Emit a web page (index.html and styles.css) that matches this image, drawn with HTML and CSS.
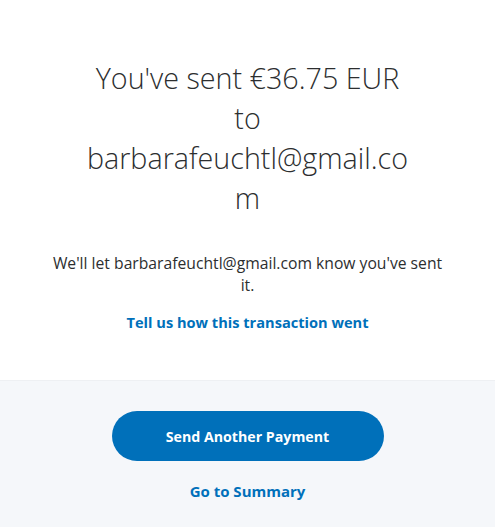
FILE: index.html
```html
<!DOCTYPE html>
<html>
<head>
<meta charset="utf-8">
<link rel="stylesheet" href="styles.css">
</head>
<body>
<main class="page">
  <section class="top">
    <h1 class="headline">You've sent €36.75 EUR to barbarafeuchtl@gmail.com</h1>
    <p class="note">We'll let barbarafeuchtl@gmail.com know you've sent it.</p>
    <a class="link" href="#">Tell us how this transaction went</a>
  </section>
  <section class="bottom">
    <button class="primary">Send Another Payment</button>
    <a class="link summary" href="#">Go to Summary</a>
  </section>
</main>
</body>
</html>
```
FILE: styles.css
```css
html, body {
  margin: 0;
  padding: 0;
  height: 100%;
}
body {
  font-family: "Open Sans", "Noto Sans", sans-serif;
  color: #2c2e2f;
  background: #f5f7fa;
}
.page {
  display: flex;
  flex-direction: column;
  min-height: 100%;
}
.top {
  background: #ffffff;
  height: 380px;
  box-sizing: border-box;
  padding-top: 58px;
  display: flex;
  flex-direction: column;
  align-items: center;
  text-align: center;
}
.headline {
  margin: 0;
  width: 332px;
  font-weight: 300;
  font-size: 28.7px;
  line-height: 40px;
  overflow-wrap: anywhere;
  color: #2c2e2f;
}
.note {
  margin: 34px 0 0;
  width: 400px;
  font-size: 15.7px;
  line-height: 22px;
}
.link {
  color: #0070ba;
  font-weight: 700;
  font-size: 15px;
  text-decoration: none;
}
.top .link {
  margin-top: 16px;
  font-size: 14.6px;
}
.bottom {
  flex: 1;
  background: #f5f7fa;
  border-top: 1px solid #eef0f3;
  display: flex;
  flex-direction: column;
  align-items: center;
  padding-top: 30px;
}
.primary {
  width: 272px;
  height: 50px;
  border: 0;
  border-radius: 25px;
  background: #0070ba;
  color: #fff;
  font-family: inherit;
  font-weight: 700;
  font-size: 14.2px;
  cursor: pointer;
}
.summary {
  margin-top: 20px;
}
```
